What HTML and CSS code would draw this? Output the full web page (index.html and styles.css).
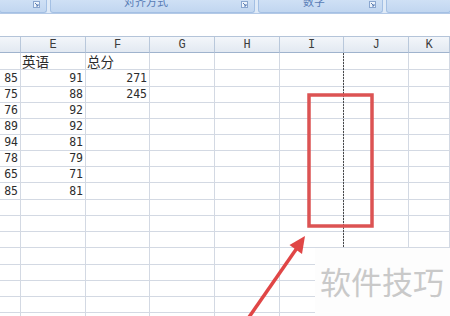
FILE: index.html
```html
<!DOCTYPE html>
<html lang="zh-CN">
<head>
<meta charset="utf-8">
<title>Excel</title>
<link rel="stylesheet" href="styles.css">
</head>
<body>
<div class="ribbon">
  <div class="grp g1"><span class="lbl"></span><span class="launch"><svg width="7" height="7" viewBox="0 0 7 7"><rect x="0.5" y="0.5" width="6" height="6" fill="#eef4fb" stroke="#8aa6cf"/><path d="M2 2 L5 5 M5 3 V5 H3" stroke="#5a7db3" fill="none"/></svg></span></div>
  <div class="grp g2"><span class="lbl">对齐方式</span><span class="launch"><svg width="7" height="7" viewBox="0 0 7 7"><rect x="0.5" y="0.5" width="6" height="6" fill="#eef4fb" stroke="#8aa6cf"/><path d="M2 2 L5 5 M5 3 V5 H3" stroke="#5a7db3" fill="none"/></svg></span></div>
  <div class="grp g3"><span class="lbl">数字</span><span class="launch"><svg width="7" height="7" viewBox="0 0 7 7"><rect x="0.5" y="0.5" width="6" height="6" fill="#eef4fb" stroke="#8aa6cf"/><path d="M2 2 L5 5 M5 3 V5 H3" stroke="#5a7db3" fill="none"/></svg></span></div>
  <div class="grp g4"></div>
</div>
<div class="fbar"></div>
<div class="sheet">
  <div class="hdr"><span></span><span>E</span><span>F</span><span>G</span><span>H</span><span>I</span><span>J</span><span>K</span></div>
  <div class="r h17"><span></span><span class="tx">英语</span><span class="tx">总分</span><span></span><span></span><span></span><span></span><span></span></div>
  <div class="r h17"><span>85</span><span>91</span><span>271</span><span></span><span></span><span></span><span></span><span></span></div>
  <div class="r"><span>75</span><span>88</span><span>245</span><span></span><span></span><span></span><span></span><span></span></div>
  <div class="r"><span>76</span><span>92</span><span></span><span></span><span></span><span></span><span></span><span></span></div>
  <div class="r"><span>89</span><span>92</span><span></span><span></span><span></span><span></span><span></span><span></span></div>
  <div class="r"><span>94</span><span>81</span><span></span><span></span><span></span><span></span><span></span><span></span></div>
  <div class="r"><span>78</span><span>79</span><span></span><span></span><span></span><span></span><span></span><span></span></div>
  <div class="r"><span>65</span><span>71</span><span></span><span></span><span></span><span></span><span></span><span></span></div>
  <div class="r h17"><span>85</span><span>81</span><span></span><span></span><span></span><span></span><span></span><span></span></div>
  <div class="r"><span></span><span></span><span></span><span></span><span></span><span></span><span></span><span></span></div>
  <div class="r"><span></span><span></span><span></span><span></span><span></span><span></span><span></span><span></span></div>
  <div class="r"><span></span><span></span><span></span><span></span><span></span><span></span><span></span><span></span></div>
  <div class="r h17"><span></span><span></span><span></span><span></span><span></span><span></span><span></span><span></span></div>
  <div class="r"><span></span><span></span><span></span><span></span><span></span><span></span><span></span><span></span></div>
  <div class="r"><span></span><span></span><span></span><span></span><span></span><span></span><span></span><span></span></div>
  <div class="r"><span></span><span></span><span></span><span></span><span></span><span></span><span></span><span></span></div>
  <div class="r"><span></span><span></span><span></span><span></span><span></span><span></span><span></span><span></span></div>
</div>
<div class="wm">软件技巧</div>
<svg class="marks" width="450" height="316" viewBox="0 0 450 316">
  <line x1="343.5" y1="53" x2="343.5" y2="247" stroke="#4a4a4a" stroke-width="1" stroke-dasharray="2 1"/>
  <rect x="309" y="95" width="63" height="131" fill="none" stroke="#dc5353" stroke-width="3.5"/>
  <line x1="247" y1="320" x2="297" y2="248" stroke="#e04646" stroke-width="3.5"/>
  <polygon points="305,236 302,254 289.5,245" fill="#e04646"/>
</svg>
</body>
</html>
```

FILE: styles.css
```css
body {
  margin: 0;
  width: 450px;
  height: 316px;
  overflow: hidden;
  position: relative;
  background: #ffffff;
  font-family: "DejaVu Sans Mono", monospace;
}

.ribbon {
  display: flex;
  gap: 3px;
  height: 14px;
  box-sizing: border-box;
  background: #dfeaf7;
  border-bottom: 1px solid #b3c9e6;
}

.grp {
  display: flex;
  align-items: flex-start;
  box-sizing: border-box;
  height: 13px;
  background: linear-gradient(#cfe0f5, #c1d6f0);
  border: 1px solid #a4c0e4;
  border-top: none;
  border-radius: 0 0 3px 3px;
  overflow: hidden;
}

.g1 { width: 48px; margin-left: -1px; }
.g2 { width: 205px; }
.g3 { width: 125px; }
.g4 { flex: 1; margin-right: -1px; }

.lbl {
  flex: 1;
  text-align: center;
  font-family: "Noto Sans CJK SC", sans-serif;
  font-size: 11px;
  line-height: 11px;
  margin-top: -4px;
  color: #587cb6;
}

.launch {
  display: flex;
  margin: 0 6px 0 0;
  padding-top: 1px;
}

.fbar {
  height: 22px;
  background: #ffffff;
}

.sheet {
  display: flex;
  flex-direction: column;
}

.hdr, .r {
  display: grid;
  grid-template-columns: 21px 65px 64px 65px 65px 64px 65px 1fr;
}

.hdr {
  height: 17px;
  box-sizing: border-box;
  border-top: 1px solid #b4c4d9;
  background: linear-gradient(#f3f6fa, #e1e8f1);
}

.hdr span {
  box-sizing: border-box;
  border-right: 1px solid #b9c8db;
  border-bottom: 1px solid #9fb3cd;
  display: flex;
  align-items: center;
  justify-content: center;
  font-family: "Liberation Mono", monospace;
  font-size: 12px;
  color: #3c3c3c;
}

.r { height: 16px; }
.r.h17 { height: 17px; }

.r span {
  box-sizing: border-box;
  border-right: 1px solid #d3d9e3;
  border-bottom: 1px solid #d3d9e3;
  display: flex;
  align-items: flex-end;
  justify-content: flex-end;
  padding: 0 2px 1px 0;
  font-size: 11.5px;
  line-height: 13px;
  color: #2c2c2c;
}

.r span.tx {
  justify-content: flex-start;
  padding: 0 0 0 1px;
  font-family: "Noto Sans CJK SC", sans-serif;
  font-size: 13.5px;
  line-height: 15px;
}

.wm {
  position: absolute;
  left: 315px;
  top: 248px;
  width: 135px;
  height: 68px;
  background: #fdfdfd;
  box-sizing: border-box;
  padding: 15px 0 0 5px;
  font-family: "Noto Sans CJK SC", sans-serif;
  font-size: 31px;
  line-height: 36px;
  color: #c9c9c9;
  white-space: nowrap;
}

.marks {
  position: absolute;
  left: 0;
  top: 0;
}
```
